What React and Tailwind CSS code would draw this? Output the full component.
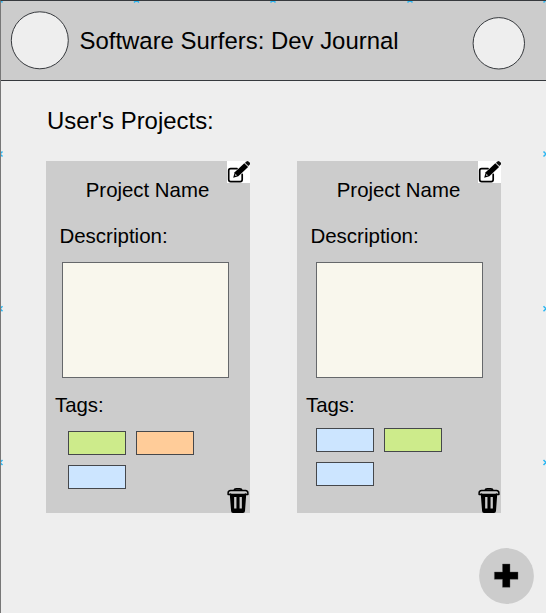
import React from "react";

const markers = [
  [0, 0], [136.5, 0], [273, 0], [410, 0], [546, 0],
  [0, 154], [0, 308.7], [0, 462.5],
  [546, 154], [546, 308.7], [546, 462.5],
];

function SelectionMarkers() {
  return (
    <svg className="pointer-events-none absolute -left-px -top-px" width="546" height="613">
      {markers.map(([x, y]) => (
        <path
          key={`${x}-${y}`}
          d={`M${x - 2.5} ${y - 2.5}l5 5m0 -5l-5 5`}
          stroke="#29b6f2"
          strokeWidth="1.5"
        />
      ))}
    </svg>
  );
}

function EditIcon() {
  return (
    <svg className="block" width="23" height="22" viewBox="0 0 23 22" fill="none">
      <path
        d="M10 7.6H3.7Q1.7 7.6 1.7 9.6V18.6Q1.7 20.7 3.7 20.7H13.2Q15.2 20.7 15.2 18.6V13.4"
        stroke="#000"
        strokeWidth="1.7"
        strokeLinecap="round"
      />
      <path d="M6.2 16.7L7.7 11.2L17.3 2.2L21.1 5.9L11.3 15.2Z" fill="#000" />
      <path d="M18 1.7L19.5 .4Q20.5 -.3 21.4 .4L22.7 1.6Q23.4 2.7 22.6 3.7L21.4 5.1Z" fill="#111" />
      <path d="M8.4 12.7L10.1 14.4L7.9 15.1Z" fill="#bbb" />
      <path d="M17.7 2L21.2 5.5" stroke="#888" strokeWidth=".5" />
    </svg>
  );
}

function TrashIcon() {
  return (
    <svg className="block" width="22" height="25" viewBox="0 0 22 25" fill="none">
      <path d="M2.8 6.5H19.2L18 23Q17.8 25 16 25H6Q4.2 25 4.1 23Z" fill="#000" />
      <path
        d="M7 2.6Q7.4 .9 9.2 .9H12.8Q14.6 .9 15 2.6"
        stroke="#000"
        strokeWidth="1.7"
      />
      <path
        d="M3.6 2.6H18.4Q20.9 2.8 20.9 5V6.4H19.3Q18.6 5.7 17.6 6.6H4.4Q3.4 5.7 2.7 6.4H1.1V5Q1.1 2.8 3.6 2.6Z"
        fill="#ccc"
        stroke="#000"
        strokeWidth="1.5"
        strokeLinejoin="round"
      />
      <path d="M8.3 9V20.5M13.7 9V20.5" stroke="#ccc" strokeWidth="2.3" />
    </svg>
  );
}

function Tag({ color }) {
  return <span className={`h-6 w-[58px] border border-[#45474b] ${color}`} />;
}

function ProjectCard({ tags, boxMargin, tagsMargin, tagsTop }) {
  return (
    <article className="relative h-[352px] w-[204px] bg-[#ccc]">
      <h2 className="pr-px pt-[17px] text-center text-[20.4px] leading-6">Project Name</h2>
      <h3 className="ml-[13.4px] mt-[22px] text-[20.5px] leading-6">Description:</h3>
      <div className={`mt-[14px] h-[116px] w-[167px] border border-[#66686b] bg-[#f9f7ed] ${boxMargin}`} />
      <h3 className="ml-[9px] mt-[15px] text-[20.4px] leading-6">Tags:</h3>
      <div className={`flex w-[140px] flex-wrap gap-x-[10px] gap-y-[10px] ${tagsMargin} ${tagsTop}`}>
        {tags.map((color, i) => <Tag key={i} color={color} />)}
      </div>
      <button aria-label="Edit project" className="absolute right-0 top-0 bg-white">
        <EditIcon />
      </button>
      <button aria-label="Delete project" className="absolute bottom-0 right-[1.5px]">
        <TrashIcon />
      </button>
    </article>
  );
}

export default function App() {
  return (
    <div className="relative flex h-[613px] w-[546px] flex-col overflow-hidden border-l border-t border-l-[#777] border-t-[#36393d] bg-[#eee] font-['Liberation_Sans',Arial,sans-serif] text-black">
      <header className="flex h-20 shrink-0 border-b border-[#36393d] bg-[#ccc]">
        <svg className="ml-[9px] mt-[9px]" width="60" height="60">
          <circle cx="29.8" cy="30.3" r="28.5" fill="#eee" stroke="#36393d" />
        </svg>
        <h1 className="ml-[9.5px] mt-[26px] w-[330.5px] whitespace-nowrap text-[23.93px] leading-7">
          Software Surfers: Dev Journal
        </h1>
        <svg className="ml-[61px] mt-[14px]" width="56" height="56">
          <circle cx="27.8" cy="28.3" r="25.7" fill="#eee" stroke="#36393d" />
        </svg>
      </header>
      <main className="flex grow flex-col">
        <h2 className="ml-[46px] mt-[26px] text-[23.93px] leading-7">User's Projects:</h2>
        <section className="ml-[45px] mt-[26px] flex gap-[47px]">
          <ProjectCard
            tags={["bg-[#cdeb8b]", "bg-[#ffcc99]", "bg-[#cce5ff]"]}
            boxMargin="ml-4"
            tagsMargin="ml-[22px]"
            tagsTop="mt-[14px]"
          />
          <ProjectCard
            tags={["bg-[#cce5ff]", "bg-[#cdeb8b]", "bg-[#cce5ff]"]}
            boxMargin="ml-[19px]"
            tagsMargin="ml-[19px]"
            tagsTop="mt-[10.5px]"
          />
        </section>
        <button aria-label="Add project" className="ml-[478px] mt-[35px] w-[55px]">
          <svg className="block" width="55" height="56" viewBox="0 0 55 56">
            <ellipse cx="27.5" cy="28" rx="27.4" ry="27.9" fill="#ccc" />
            <path
              d="M23.5 16H31V24H39V31.3H31V39.3H23.5V31.3H15.4V24H23.5Z"
              fill="#000"
              stroke="#555"
              strokeWidth=".4"
            />
          </svg>
        </button>
      </main>
      <SelectionMarkers />
    </div>
  );
}
